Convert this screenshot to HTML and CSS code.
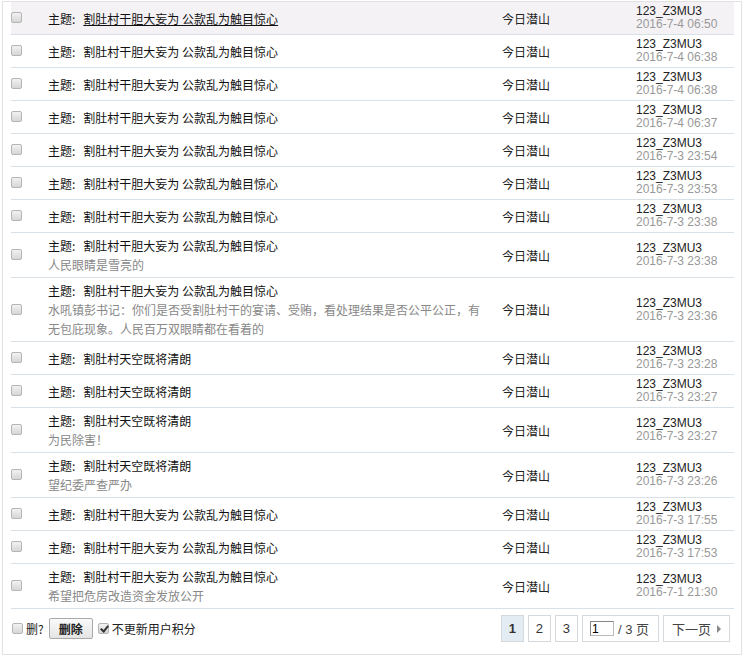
FILE: index.html
```html
<!DOCTYPE html>
<html lang="zh-CN">
<head>
    <meta charset="UTF-8">
    <title>帖子管理</title>
    <link rel="stylesheet" href="styles.css">
</head>
<body>
    <div class="panel">
        <table class="posts">
            <colgroup>
                <col class="c-check">
                <col class="c-title">
                <col class="c-forum">
                <col class="c-gap">
                <col class="c-user">
            </colgroup>
            <tbody>
                <tr class="hover">
                    <td class="chk"><input type="checkbox"></td>
                    <td class="subject"><span class="lbl">主题:</span><a href="#">割肚村干胆大妄为 公款乱为触目惊心</a></td>
                    <td class="forum">今日潜山</td>
                    <td></td>
                    <td class="by"><span class="name">123_Z3MU3</span><span class="date">2016-7-4 06:50</span></td>
                </tr>
                <tr>
                    <td class="chk"><input type="checkbox"></td>
                    <td class="subject"><span class="lbl">主题:</span><a href="#">割肚村干胆大妄为 公款乱为触目惊心</a></td>
                    <td class="forum">今日潜山</td>
                    <td></td>
                    <td class="by"><span class="name">123_Z3MU3</span><span class="date">2016-7-4 06:38</span></td>
                </tr>
                <tr>
                    <td class="chk"><input type="checkbox"></td>
                    <td class="subject"><span class="lbl">主题:</span><a href="#">割肚村干胆大妄为 公款乱为触目惊心</a></td>
                    <td class="forum">今日潜山</td>
                    <td></td>
                    <td class="by"><span class="name">123_Z3MU3</span><span class="date">2016-7-4 06:38</span></td>
                </tr>
                <tr>
                    <td class="chk"><input type="checkbox"></td>
                    <td class="subject"><span class="lbl">主题:</span><a href="#">割肚村干胆大妄为 公款乱为触目惊心</a></td>
                    <td class="forum">今日潜山</td>
                    <td></td>
                    <td class="by"><span class="name">123_Z3MU3</span><span class="date">2016-7-4 06:37</span></td>
                </tr>
                <tr>
                    <td class="chk"><input type="checkbox"></td>
                    <td class="subject"><span class="lbl">主题:</span><a href="#">割肚村干胆大妄为 公款乱为触目惊心</a></td>
                    <td class="forum">今日潜山</td>
                    <td></td>
                    <td class="by"><span class="name">123_Z3MU3</span><span class="date">2016-7-3 23:54</span></td>
                </tr>
                <tr>
                    <td class="chk"><input type="checkbox"></td>
                    <td class="subject"><span class="lbl">主题:</span><a href="#">割肚村干胆大妄为 公款乱为触目惊心</a></td>
                    <td class="forum">今日潜山</td>
                    <td></td>
                    <td class="by"><span class="name">123_Z3MU3</span><span class="date">2016-7-3 23:53</span></td>
                </tr>
                <tr>
                    <td class="chk"><input type="checkbox"></td>
                    <td class="subject"><span class="lbl">主题:</span><a href="#">割肚村干胆大妄为 公款乱为触目惊心</a></td>
                    <td class="forum">今日潜山</td>
                    <td></td>
                    <td class="by"><span class="name">123_Z3MU3</span><span class="date">2016-7-3 23:38</span></td>
                </tr>
                <tr>
                    <td class="chk"><input type="checkbox"></td>
                    <td class="subject"><span class="lbl">主题:</span><a href="#">割肚村干胆大妄为 公款乱为触目惊心</a>
                        <div class="msg">人民眼睛是雪亮的</div></td>
                    <td class="forum">今日潜山</td>
                    <td></td>
                    <td class="by"><span class="name">123_Z3MU3</span><span class="date">2016-7-3 23:38</span></td>
                </tr>
                <tr>
                    <td class="chk"><input type="checkbox"></td>
                    <td class="subject"><span class="lbl">主题:</span><a href="#">割肚村干胆大妄为 公款乱为触目惊心</a>
                        <div class="msg">水吼镇彭书记：你们是否受割肚村干的宴请、受贿，看处理结果是否公平公正，有无包庇现象。人民百万双眼睛都在看着的</div></td>
                    <td class="forum">今日潜山</td>
                    <td></td>
                    <td class="by"><span class="name">123_Z3MU3</span><span class="date">2016-7-3 23:36</span></td>
                </tr>
                <tr>
                    <td class="chk"><input type="checkbox"></td>
                    <td class="subject"><span class="lbl">主题:</span><a href="#">割肚村天空既将清朗</a></td>
                    <td class="forum">今日潜山</td>
                    <td></td>
                    <td class="by"><span class="name">123_Z3MU3</span><span class="date">2016-7-3 23:28</span></td>
                </tr>
                <tr>
                    <td class="chk"><input type="checkbox"></td>
                    <td class="subject"><span class="lbl">主题:</span><a href="#">割肚村天空既将清朗</a></td>
                    <td class="forum">今日潜山</td>
                    <td></td>
                    <td class="by"><span class="name">123_Z3MU3</span><span class="date">2016-7-3 23:27</span></td>
                </tr>
                <tr>
                    <td class="chk"><input type="checkbox"></td>
                    <td class="subject"><span class="lbl">主题:</span><a href="#">割肚村天空既将清朗</a>
                        <div class="msg">为民除害！</div></td>
                    <td class="forum">今日潜山</td>
                    <td></td>
                    <td class="by"><span class="name">123_Z3MU3</span><span class="date">2016-7-3 23:27</span></td>
                </tr>
                <tr>
                    <td class="chk"><input type="checkbox"></td>
                    <td class="subject"><span class="lbl">主题:</span><a href="#">割肚村天空既将清朗</a>
                        <div class="msg">望纪委严查严办</div></td>
                    <td class="forum">今日潜山</td>
                    <td></td>
                    <td class="by"><span class="name">123_Z3MU3</span><span class="date">2016-7-3 23:26</span></td>
                </tr>
                <tr>
                    <td class="chk"><input type="checkbox"></td>
                    <td class="subject"><span class="lbl">主题:</span><a href="#">割肚村干胆大妄为 公款乱为触目惊心</a></td>
                    <td class="forum">今日潜山</td>
                    <td></td>
                    <td class="by"><span class="name">123_Z3MU3</span><span class="date">2016-7-3 17:55</span></td>
                </tr>
                <tr>
                    <td class="chk"><input type="checkbox"></td>
                    <td class="subject"><span class="lbl">主题:</span><a href="#">割肚村干胆大妄为 公款乱为触目惊心</a></td>
                    <td class="forum">今日潜山</td>
                    <td></td>
                    <td class="by"><span class="name">123_Z3MU3</span><span class="date">2016-7-3 17:53</span></td>
                </tr>
                <tr>
                    <td class="chk"><input type="checkbox"></td>
                    <td class="subject"><span class="lbl">主题:</span><a href="#">割肚村干胆大妄为 公款乱为触目惊心</a>
                        <div class="msg">希望把危房改造资金发放公开</div></td>
                    <td class="forum">今日潜山</td>
                    <td></td>
                    <td class="by"><span class="name">123_Z3MU3</span><span class="date">2016-7-1 21:30</span></td>
                </tr>
            </tbody>
        </table>

        <div class="footer">
            <div class="actions">
                <label><input type="checkbox"> 删?</label>
                <button class="btn">删除</button>
                <label><input type="checkbox" checked> 不更新用户积分</label>
            </div>
            <div class="pager">
                <a class="pg current" href="#">1</a>
                <a class="pg" href="#">2</a>
                <a class="pg" href="#">3</a>
                <span class="pg jump"><input type="text" value="1"> / 3 页</span>
                <a class="pg next" href="#">下一页 <span class="arr"></span></a>
            </div>
        </div>
    </div>
</body>
</html>
```

FILE: styles.css
```css
/* base */
body {
    margin: 0;
    padding: 1px 0 0 2px;
    font-family: "Liberation Sans", Arial, "Noto Sans CJK SC", sans-serif;
    font-size: 12px;
    color: #333;
    background: #fff;
}

.panel {
    width: 722px;
    padding: 0 8px;
    border: 1px solid #e2e2e2;
}

/* list table */
.posts {
    width: 723px;
    table-layout: fixed;
    border-collapse: collapse;
}

.c-check { width: 37px; }
.c-title { width: 440px; }
.c-forum { width: 76px; }
.c-gap { width: 72px; }
.c-user { width: 98px; }

.posts td {
    padding: 3px 0;
    border-bottom: 1px solid #d9e1e8;
    vertical-align: middle;
}

.posts tr.hover td {
    background: #f5f2f6;
}

.posts tr.hover .subject a {
    text-decoration: underline;
}

.posts td.chk {
    padding-left: 0;
}

.subject {
    font-family: "Noto Sans CJK SC", sans-serif;
    line-height: 19px;
    color: #111;
}

.subject .lbl {
    margin-right: 8px;
}

.subject a {
    color: #111;
    text-decoration: none;
}

.msg {
    color: #888;
}

.forum {
    text-align: center;
    font-family: "Noto Sans CJK SC", sans-serif;
    color: #222;
}

.by {
    line-height: 13px;
}

.by span {
    display: block;
}

.by .name {
    color: #222;
}

.by .date {
    color: #999;
}

/* checkboxes */
input[type="checkbox"] {
    appearance: none;
    -webkit-appearance: none;
    width: 11px;
    height: 11px;
    margin: 0;
    border: 1px solid #b5b5b5;
    border-radius: 2px;
    background: linear-gradient(#f2f2f2, #d6d6d6);
    vertical-align: -1px;
    position: relative;
}

input[type="checkbox"]:checked::after {
    content: "";
    position: absolute;
    left: 3px;
    top: 0;
    width: 3px;
    height: 6px;
    border: solid #333;
    border-width: 0 2px 2px 0;
    transform: rotate(40deg);
}

/* footer */
.footer {
    display: flex;
    justify-content: space-between;
    align-items: center;
    padding: 6px 0 12px 1px;
}

.actions {
    display: flex;
    align-items: center;
    gap: 5px;
    font-family: "Noto Sans CJK SC", sans-serif;
    color: #222;
}

.actions label {
    display: flex;
    align-items: center;
    gap: 3px;
}

.btn {
    height: 21px;
    padding: 0 9px;
    font-family: "Noto Sans CJK SC", sans-serif;
    font-size: 12px;
    font-weight: bold;
    color: #222;
    border: 1px solid #aaa;
    border-radius: 2px;
    background: linear-gradient(#fafafa, #e4e4e4);
}

.pager {
    display: flex;
    gap: 4px;
    margin-right: 3px;
}

.pg {
    display: flex;
    align-items: center;
    justify-content: center;
    min-width: 21px;
    height: 25px;
    border: 1px solid #d4d9de;
    color: #333;
    text-decoration: none;
    font-size: 13px;
}

.pg.current {
    background: #e3ebf3;
    font-weight: bold;
}

.pg.jump {
    padding: 0 9px 0 7px;
    font-family: "Liberation Sans", "Noto Sans CJK SC", sans-serif;
    font-size: 13px;
    color: #444;
}

.jump input {
    width: 20px;
    height: 13px;
    margin-right: 4px;
    padding: 0 1px;
    border: 1px solid #bbb;
    border-top-color: #888;
    border-left-color: #888;
    font-family: "Liberation Sans", sans-serif;
    font-size: 12px;
}

.pg.next {
    width: 65px;
    gap: 6px;
    font-family: "Noto Sans CJK SC", sans-serif;
    color: #444;
}

.arr {
    width: 0;
    height: 0;
    border-left: 4px solid #888;
    border-top: 4px solid transparent;
    border-bottom: 4px solid transparent;
}
```
